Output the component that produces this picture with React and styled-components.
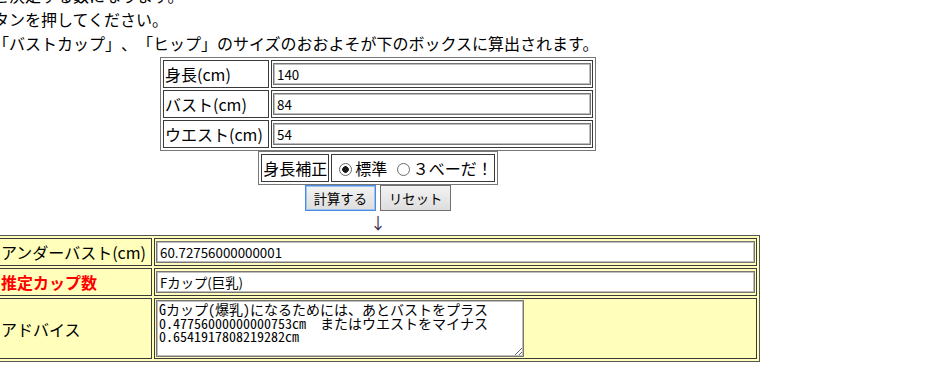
import React from 'react';
import styled, { createGlobalStyle } from 'styled-components';

const GlobalStyle = createGlobalStyle`
  html, body {
    margin: 0;
    padding: 0;
    background: #fff;
    overflow: hidden;
  }
  body {
    font-family: 'Noto Sans CJK JP', 'Noto Sans', sans-serif;
    color: #000;
    text-spacing-trim: space-all;
  }
`;

// ページ全体（少しスクロールされた状態）
const Page = styled.div`
  margin: -17px 0 0 -4px;
  width: 764px;
  font-size: 16px;
  line-height: 24px;
`;

const Intro = styled.div`
  white-space: nowrap;
  margin-left: -3px;
`;

const FormTable = styled.table`
  margin: ${(p) => p.$top || 0}px auto 0;
  width: ${(p) => (p.$width ? `${p.$width}px` : 'auto')};
  border-collapse: separate;
  border-spacing: 2px;
  border: 1px solid #777;
  background: ${(p) => p.$bg || 'transparent'};
  ${(p) => p.$bg && 'border-color: #555;'}
`;

const Cell = styled.td`
  border: 1px solid #3a3a3a;
  padding: 1px;
  line-height: 24px;
  vertical-align: middle;
  white-space: nowrap;
  width: ${(p) => (p.$w ? `${p.$w}px` : 'auto')};
  color: ${(p) => (p.$alert ? '#ff0000' : '#000')};
  font-weight: ${(p) => (p.$alert ? 700 : 400)};
`;

const TextInput = styled.input`
  display: block;
  box-sizing: border-box;
  width: 100%;
  height: 22px;
  margin: 0;
  padding: 1px 3px;
  font-family: 'Noto Sans CJK JP', sans-serif;
  font-size: 13.33px;
  color: #000;
  background: #fff;
  border: 1px solid #767676;
  box-shadow: inset 0 0 0 1px #bdbdbd;
  border-radius: 0;
  outline: none;
`;

const Radio = styled.input`
  appearance: none;
  box-sizing: border-box;
  width: 13px;
  height: 13px;
  margin: 0 3px 0 6px;
  border: 1px solid #6a6a6a;
  border-radius: 50%;
  background: #fff;
  vertical-align: -1px;

  &:checked {
    background: radial-gradient(circle, #1a1a1a 0 3px, #fff 3.6px);
  }
`;

const ButtonRow = styled.div`
  display: flex;
  justify-content: center;
  gap: 4px;
`;

const Button = styled.button`
  box-sizing: border-box;
  height: 26px;
  padding: 0 8px;
  font-family: 'Noto Sans CJK JP', sans-serif;
  font-size: 13.33px;
  color: #000;
  background: linear-gradient(#f3f3f3, #dddddd);
  border: 1px solid ${(p) => (p.$focused ? '#4a8ae0' : '#707070')};
  box-shadow: ${(p) => (p.$focused ? 'inset 0 0 0 1px #9cc2f0' : 'none')};
  border-radius: 0;
`;

const Arrow = styled.div`
  text-align: center;
  height: 24px;
  line-height: 22px;
  font-size: 16px;
  color: #3a2a48;
`;

const Advice = styled.textarea`
  display: block;
  box-sizing: border-box;
  width: 368px;
  height: 57px;
  margin: 0;
  padding: 2px 2px;
  font-family: 'Noto Sans Mono CJK JP', 'Noto Sans CJK JP', monospace;
  font-size: 14px;
  line-height: 13.5px;
  color: #000;
  background: #fff;
  border: 1px solid #767676;
  box-shadow: inset 0 0 0 1px #bdbdbd;
  border-radius: 0;
  outline: none;
`;

const adviceText =
  'Gカップ(爆乳)になるためには、あとバストをプラス0.47756000000000753cm　またはウエストをマイナス0.6541917808219282cm';

const App = () => {
  return (
    <>
      <GlobalStyle />
      <Page>
        <Intro>
          と決定する数になります。
          <br />
          タンを押してください。
          <br />
          「バストカップ」、「ヒップ」のサイズのおおよそが下のボックスに算出されます。
        </Intro>

        <FormTable $top={2} $width={436}>
          <tbody>
            <tr>
              <Cell $w={102}>身長(cm)</Cell>
              <Cell>
                <TextInput type="text" defaultValue="140" />
              </Cell>
            </tr>
            <tr>
              <Cell>バスト(cm)</Cell>
              <Cell>
                <TextInput type="text" defaultValue="84" />
              </Cell>
            </tr>
            <tr>
              <Cell>ウエスト(cm)</Cell>
              <Cell>
                <TextInput type="text" defaultValue="54" />
              </Cell>
            </tr>
          </tbody>
        </FormTable>

        <FormTable>
          <tbody>
            <tr>
              <Cell>身長補正</Cell>
              <Cell>
                <Radio type="radio" name="hosei" defaultChecked />
                標準 <Radio type="radio" name="hosei" />３べーだ！
              </Cell>
            </tr>
          </tbody>
        </FormTable>

        <ButtonRow>
          <Button $focused>計算する</Button>
          <Button>リセット</Button>
        </ButtonRow>

        <Arrow>↓</Arrow>

        <FormTable $width={764} $bg="#ffffbb">
          <tbody>
            <tr>
              <Cell $w={149}>アンダーバスト(cm)</Cell>
              <Cell>
                <TextInput type="text" defaultValue="60.72756000000001" />
              </Cell>
            </tr>
            <tr>
              <Cell $alert>推定カップ数</Cell>
              <Cell>
                <TextInput type="text" defaultValue="Fカップ(巨乳)" />
              </Cell>
            </tr>
            <tr>
              <Cell>アドバイス</Cell>
              <Cell>
                <Advice defaultValue={adviceText} />
              </Cell>
            </tr>
          </tbody>
        </FormTable>
      </Page>
    </>
  );
};

export default App;
